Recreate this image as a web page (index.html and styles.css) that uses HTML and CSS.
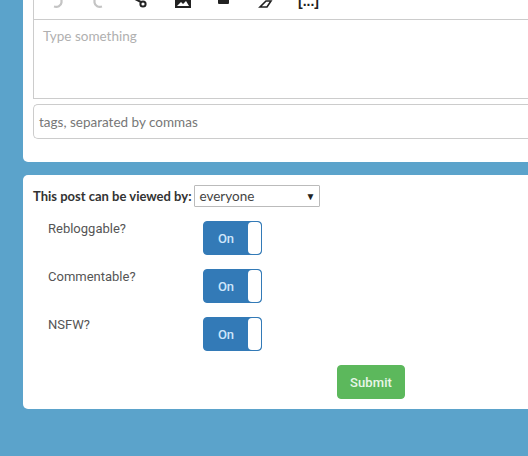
FILE: index.html
```html
<!DOCTYPE html>
<html lang="en">
<head>
  <meta charset="UTF-8">
  <title>New post</title>
  <link rel="stylesheet" href="styles.css">
</head>
<body>
  <div class="panel panel-editor">
    <div class="editor">
      <div class="toolbar">
        <svg class="tool tool-undo" width="16" height="16" viewBox="0 0 16 16"><path d="M4 6.500c3.500 1 7-.5 7.500-4V0" fill="none" stroke="#c4c4c4" stroke-width="2.200"/></svg>
        <svg class="tool tool-redo" width="16" height="16" viewBox="0 0 16 16"><path d="M12 6.500c-3.500 1-7-.5-7.500-4V0" fill="none" stroke="#c4c4c4" stroke-width="2.200"/></svg>
        <svg class="tool tool-link" width="16" height="16" viewBox="0 0 16 16"><circle cx="10" cy="4" r="2.600" fill="none" stroke="#222" stroke-width="2"/><path d="M2 -1l6 3" stroke="#222" stroke-width="2"/></svg>
        <svg class="tool tool-image" width="16" height="16" viewBox="0 0 16 16"><rect x="0" y="-6" width="16" height="14" fill="#222"/><path d="M2 6l4-4 2 2 3-3 3 5z" fill="#fff"/></svg>
        <svg class="tool tool-video" width="16" height="16" viewBox="0 0 16 16"><rect x="2" y="-4" width="11" height="8" rx="1" fill="#222"/></svg>
        <svg class="tool tool-eraser" width="16" height="16" viewBox="0 0 16 16"><path d="M9 1h5l-4 6H3z" fill="#fff" stroke="#222" stroke-width="1.600"/></svg>
        <span class="tool-more">[...]</span>
      </div>
      <div class="editor-body">Type something</div>
    </div>
    <div class="tags">tags, separated by commas</div>
  </div>

  <div class="panel panel-options">
    <div class="viewers">
      <b class="viewers-label">This post can be viewed by:</b>
      <div class="select">everyone<span class="select-arrow">▼</span></div>
    </div>
    <div class="option">
      <span class="option-label">Rebloggable?</span>
      <div class="switch"><span class="switch-on">On</span><span class="switch-handle"></span></div>
    </div>
    <div class="option">
      <span class="option-label">Commentable?</span>
      <div class="switch"><span class="switch-on">On</span><span class="switch-handle"></span></div>
    </div>
    <div class="option">
      <span class="option-label">NSFW?</span>
      <div class="switch"><span class="switch-on">On</span><span class="switch-handle"></span></div>
    </div>
    <div class="actions"><button class="submit">Submit</button></div>
  </div>
</body>
</html>
```

FILE: styles.css
```css
html, body {
  height: 100%;
}
body {
  margin: 0;
  overflow: hidden;
  background: #5ba3cb;
  color: #333;
  font-family: Lato, sans-serif;
  font-size: 13.5px;
}
.panel {
  box-sizing: border-box;
  width: 520px;
  margin-left: 23px;
  background: #fff;
  padding-left: 10px;
}
.panel-editor {
  height: 162px;
  margin-bottom: 13px;
  border-radius: 0 0 5px 5px;
}
.panel-options {
  height: 234px;
  border-radius: 5px;
  padding-top: 10px;
}

.editor {
  border: 1px solid #ccc;
  border-top: 0;
  height: 99px;
  box-sizing: border-box;
}
.toolbar {
  display: flex;
  height: 20px;
  box-sizing: border-box;
  border-bottom: 1px solid #ccc;
  overflow: hidden;
}
.tool {
  flex: none;
}
.tool-undo { margin-left: 16px; }
.tool-redo { margin-left: 24px; }
.tool-link { margin-left: 27px; }
.tool-image { margin-left: 26px; }
.tool-video { margin-left: 25px; }
.tool-eraser { margin-left: 25px; }
.tool-more {
  margin-left: 25px;
  margin-top: -7px;
  font-family: "Liberation Sans", sans-serif;
  font-size: 14px;
  font-weight: bold;
  color: #222;
  line-height: 16px;
}
.editor-body {
  padding: 7px 9px;
  color: #b0b0b0;
  line-height: 18px;
}
.tags {
  box-sizing: border-box;
  height: 35px;
  margin-top: 5px;
  padding: 0 5px;
  border: 1px solid #ccc;
  border-right: 0;
  border-radius: 5px 0 0 5px;
  color: #777;
  line-height: 34px;
}

.viewers {
  display: flex;
  align-items: center;
  gap: 3px;
  height: 22px;
}
.viewers-label {
  font-size: 13px;
  margin-top: -1px;
}
.select {
  box-sizing: border-box;
  display: flex;
  justify-content: space-between;
  align-items: center;
  width: 126px;
  height: 22px;
  padding: 0 4px;
  border: 1px solid #bbb;
  border-radius: 1px;
  color: #444;
}
.select-arrow {
  font-size: 10px;
  color: #222;
}
.option {
  display: flex;
  margin-top: 14px;
  height: 34px;
  padding-left: 15px;
}
.option-label {
  width: 155px;
  font-family: Roboto, sans-serif;
  font-size: 13px;
  line-height: 16px;
  color: #555;
}
.switch {
  box-sizing: border-box;
  display: flex;
  width: 59px;
  height: 34px;
  border: 1px solid #337ab7;
  border-radius: 4px;
  background: #337ab7;
  overflow: hidden;
}
.switch-on {
  flex: 1;
  color: #cfe6fb;
  font-family: Roboto, sans-serif;
  font-size: 13px;
  font-weight: 500;
  text-align: center;
  line-height: 33px;
}
.switch-handle {
  width: 13px;
  background: #fff;
  border-radius: 4px;
}
.actions {
  display: flex;
  margin-top: 14px;
  padding-left: 304px;
}
.submit {
  width: 68px;
  height: 34px;
  border: 1px solid #5cb85c;
  border-radius: 4px;
  background: #5cb85c;
  color: #e8f6e8;
  font-family: Roboto, sans-serif;
  font-size: 13px;
  font-weight: 500;
  letter-spacing: 0.1px;
  padding: 0;
}
```
